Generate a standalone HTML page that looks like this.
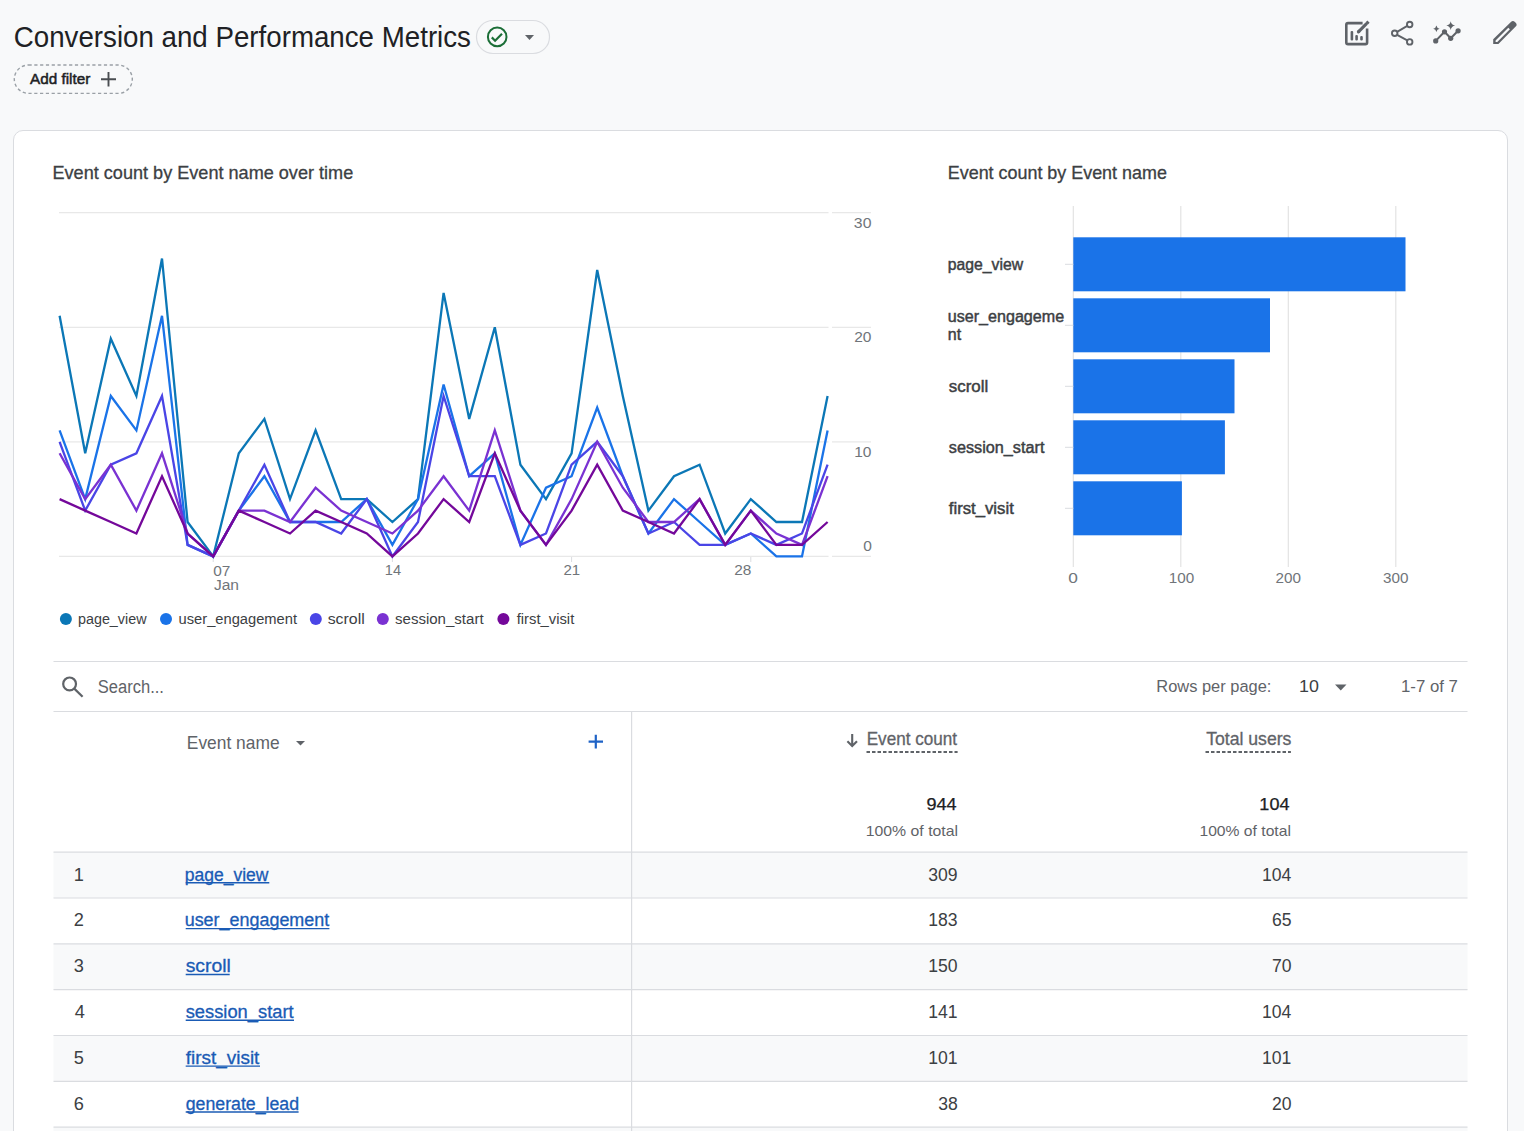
<!DOCTYPE html>
<html><head><meta charset="utf-8"><title>Conversion and Performance Metrics</title>
<style>
html,body{margin:0;padding:0;width:1524px;height:1131px;overflow:hidden;background:#f8f9fa;font-family:"Liberation Sans",sans-serif;}
.card{position:absolute;left:13.3px;top:130.2px;width:1494.6px;height:1100px;background:#fff;border:1px solid #dadce0;border-radius:10px;box-sizing:border-box;}
svg{position:absolute;left:0;top:0;}
text{font-family:"Liberation Sans",sans-serif;}
</style></head>
<body>
<div class="card"></div>
<svg width="1524" height="1131" viewBox="0 0 1524 1131">
<!-- header -->
<text x="13.75" y="46.50" style="font-size:29.3px;fill:#202124;" textLength="457.22" lengthAdjust="spacingAndGlyphs">Conversion and Performance Metrics</text>
<rect x="476.5" y="20.5" width="73" height="33" rx="16.5" fill="none" stroke="#dadce0" stroke-width="1.2"/>
<circle cx="497.2" cy="36.9" r="9.3" fill="none" stroke="#1b6e37" stroke-width="2"/>
<path d="M491.8 37.4 L495.1 40.7 L502 33.8" fill="none" stroke="#1b6e37" stroke-width="2.2"/>
<path d="M525 35 L534 35 L529.5 40 Z" fill="#5f6368"/>
<rect x="14.3" y="65" width="118" height="28.4" rx="14.2" fill="none" stroke="#9aa0a6" stroke-width="1.4" stroke-dasharray="3.2 2.6"/>
<text x="30.00" y="84.40" style="font-size:15.2px;fill:#202124;stroke:#202124;stroke-width:0.5px;" textLength="60.24" lengthAdjust="spacingAndGlyphs">Add filter</text>
<path d="M101 79.3 H116 M108.5 72 V86.6" stroke="#4a4d51" stroke-width="1.9"/>
<!-- top right icons -->
<g fill="none" stroke="#5f6368" stroke-width="2.6">
  <path d="M1362.6 23.1 H1348 Q1346.3 23.1 1346.3 24.8 V42.4 Q1346.3 44.1 1348 44.1 H1365.4 Q1367.1 44.1 1367.1 42.4 V28.6"/>
</g>
<g fill="#5f6368">
  <rect x="1350.6" y="31" width="2.6" height="9.6" rx="1.1"/>
  <rect x="1355.3" y="35" width="2.6" height="5.6" rx="1.1"/>
  <rect x="1360.2" y="36" width="2.6" height="4.6" rx="1.1"/>
</g>
<path d="M1358.4 31.8 L1366.3 23.9" stroke="#5f6368" stroke-width="3.1" stroke-linecap="round"/><path d="M1358.4 31.8 L1359.5 30.7" stroke="#5f6368" stroke-width="3.1" stroke-linecap="butt"/>
<path d="M1367.93 24.53 L1365.67 22.27 L1367.37 20.57 L1369.63 22.83 Z" fill="#5f6368"/>
<g fill="none" stroke="#5f6368" stroke-width="1.9">
  <circle cx="1409.7" cy="24.5" r="2.75"/>
  <circle cx="1394.7" cy="33.3" r="2.75"/>
  <circle cx="1409.7" cy="41.9" r="2.75"/>
  <path d="M1397.1 31.9 L1407.3 25.9 M1397.1 34.8 L1407.3 40.4"/>
</g>
<g fill="#5f6368">
  <circle cx="1435.7" cy="40.9" r="2.6"/><circle cx="1444.5" cy="31.8" r="2.6"/><circle cx="1450.7" cy="38.3" r="2.6"/><circle cx="1458.1" cy="30.8" r="2.6"/>
  <path d="M1435.7 40.9 L1444.5 31.8 L1450.7 38.3 L1458.1 30.8" fill="none" stroke="#5f6368" stroke-width="2"/>
  <path d="M1436.4 25.6 Q1436.9 28.3 1439.6 28.8 Q1436.9 29.3 1436.4 32 Q1435.9 29.3 1433.2 28.8 Q1435.9 28.3 1436.4 25.6 Z"/>
  <path d="M1450.7 21.2 Q1451.4 24.9 1455.1 25.6 Q1451.4 26.3 1450.7 30 Q1450 26.3 1446.3 25.6 Q1450 24.9 1450.7 21.2 Z"/>
</g>
<path d="M1493.2 39.2 L1510.9 21.9 Q1512.9 20 1514.9 21.9 L1515.7 22.7 Q1517.6 24.6 1515.7 26.6 L1498.4 44.1 H1493.2 Z M1495.6 40.4 V41.9 H1497.3 L1509.9 29.3 L1508.3 27.7 Z" fill="#5f6368" fill-rule="evenodd"/>
<!-- line chart -->
<text x="52.48" y="179.00" style="font-size:17.8px;fill:#3c4043;stroke:#3c4043;stroke-width:0.3px;" textLength="300.76" lengthAdjust="spacingAndGlyphs">Event count by Event name over time</text>
<line x1="59" y1="556.4" x2="828.5" y2="556.4" stroke="#e8e8e8" stroke-width="1.3"/><line x1="832" y1="556.4" x2="871" y2="556.4" stroke="#e8e8e8" stroke-width="1.3"/>
<line x1="59" y1="441.8" x2="828.5" y2="441.8" stroke="#e8e8e8" stroke-width="1.3"/><line x1="832" y1="441.8" x2="871" y2="441.8" stroke="#e8e8e8" stroke-width="1.3"/>
<line x1="59" y1="327.3" x2="828.5" y2="327.3" stroke="#e8e8e8" stroke-width="1.3"/><line x1="832" y1="327.3" x2="871" y2="327.3" stroke="#e8e8e8" stroke-width="1.3"/>
<line x1="59" y1="212.7" x2="828.5" y2="212.7" stroke="#e8e8e8" stroke-width="1.3"/><line x1="832" y1="212.7" x2="871" y2="212.7" stroke="#e8e8e8" stroke-width="1.3"/>
<line x1="213.2" y1="557" x2="213.2" y2="562" stroke="#dadce0" stroke-width="1"/>
<line x1="392.4" y1="557" x2="392.4" y2="562" stroke="#dadce0" stroke-width="1"/>
<line x1="571.6" y1="557" x2="571.6" y2="562" stroke="#dadce0" stroke-width="1"/>
<line x1="750.8" y1="557" x2="750.8" y2="562" stroke="#dadce0" stroke-width="1"/>
<text x="853.88" y="227.80" style="font-size:15.5px;fill:#70757a;" textLength="17.57" lengthAdjust="spacingAndGlyphs">30</text><text x="854.20" y="342.40" style="font-size:15.5px;fill:#70757a;">20</text><text x="854.20" y="456.90" style="font-size:15.5px;fill:#70757a;">10</text><text x="863.20" y="551.10" style="font-size:15.5px;fill:#70757a;">0</text><text x="213.21" y="575.70" style="font-size:15.5px;fill:#70757a;" textLength="17.14" lengthAdjust="spacingAndGlyphs">07</text><text x="213.90" y="589.80" style="font-size:15.5px;fill:#70757a;" textLength="25.10" lengthAdjust="spacingAndGlyphs">Jan</text><text x="384.76" y="575.40" style="font-size:15.5px;fill:#70757a;" textLength="16.28" lengthAdjust="spacingAndGlyphs">14</text><text x="563.53" y="575.40" style="font-size:15.5px;fill:#70757a;" textLength="16.71" lengthAdjust="spacingAndGlyphs">21</text><text x="734.31" y="575.40" style="font-size:15.5px;fill:#70757a;" textLength="17.14" lengthAdjust="spacingAndGlyphs">28</text>
<polyline points="59.6,315.8 85.2,453.3 110.8,338.7 136.4,396.0 162.0,258.5 187.6,522.0 213.2,556.4 238.8,453.3 264.4,418.9 290.0,499.1 315.6,430.4 341.2,499.1 366.8,499.1 392.4,522.0 418.0,499.1 443.6,292.9 469.2,418.9 494.8,327.3 520.4,464.7 546.0,499.1 571.6,453.3 597.2,270.0 622.8,396.0 648.4,510.6 674.0,476.2 699.6,464.7 725.2,533.5 750.8,499.1 776.4,522.0 802.0,522.0 827.6,396.0" fill="none" stroke="#0b77b6" stroke-width="2.3" stroke-linejoin="miter" stroke-miterlimit="4"/>
<polyline points="59.6,430.4 85.2,499.1 110.8,396.0 136.4,430.4 162.0,315.8 187.6,544.9 213.2,556.4 238.8,510.6 264.4,476.2 290.0,522.0 315.6,522.0 341.2,522.0 366.8,499.1 392.4,544.9 418.0,499.1 443.6,384.5 469.2,476.2 494.8,453.3 520.4,544.9 546.0,487.7 571.6,476.2 597.2,407.5 622.8,476.2 648.4,533.5 674.0,499.1 699.6,522.0 725.2,544.9 750.8,533.5 776.4,556.4 802.0,556.4 827.6,430.4" fill="none" stroke="#1a73e8" stroke-width="2.3" stroke-linejoin="miter" stroke-miterlimit="4"/>
<polyline points="59.6,441.8 85.2,510.6 110.8,464.7 136.4,453.3 162.0,396.0 187.6,544.9 213.2,556.4 238.8,510.6 264.4,464.7 290.0,522.0 315.6,522.0 341.2,533.5 366.8,499.1 392.4,556.4 418.0,522.0 443.6,396.0 469.2,476.2 494.8,476.2 520.4,544.9 546.0,533.5 571.6,464.7 597.2,441.8 622.8,476.2 648.4,533.5 674.0,522.0 699.6,544.9 725.2,544.9 750.8,533.5 776.4,544.9 802.0,533.5 827.6,464.7" fill="none" stroke="#4a45e6" stroke-width="2.3" stroke-linejoin="miter" stroke-miterlimit="4"/>
<polyline points="59.6,453.3 85.2,499.1 110.8,464.7 136.4,510.6 162.0,453.3 187.6,533.5 213.2,556.4 238.8,510.6 264.4,510.6 290.0,522.0 315.6,487.7 341.2,510.6 366.8,522.0 392.4,533.5 418.0,510.6 443.6,476.2 469.2,510.6 494.8,430.4 520.4,510.6 546.0,544.9 571.6,499.1 597.2,441.8 622.8,487.7 648.4,522.0 674.0,522.0 699.6,499.1 725.2,544.9 750.8,510.6 776.4,533.5 802.0,544.9 827.6,476.2" fill="none" stroke="#7a32d2" stroke-width="2.3" stroke-linejoin="miter" stroke-miterlimit="4"/>
<polyline points="59.6,499.1 85.2,510.6 110.8,522.0 136.4,533.5 162.0,476.2 187.6,533.5 213.2,556.4 238.8,510.6 264.4,522.0 290.0,533.5 315.6,510.6 341.2,522.0 366.8,533.5 392.4,556.4 418.0,533.5 443.6,499.1 469.2,522.0 494.8,453.3 520.4,510.6 546.0,544.9 571.6,510.6 597.2,464.7 622.8,510.6 648.4,522.0 674.0,533.5 699.6,499.1 725.2,544.9 750.8,510.6 776.4,544.9 802.0,544.9 827.6,522.0" fill="none" stroke="#74089a" stroke-width="2.3" stroke-linejoin="miter" stroke-miterlimit="4"/>

<circle cx="65.9" cy="619" r="6" fill="#0b77b6"/><circle cx="166" cy="619" r="6" fill="#1a73e8"/><circle cx="315.8" cy="619" r="6" fill="#4a45e6"/><circle cx="382.8" cy="619" r="6" fill="#7a32d2"/><circle cx="503.4" cy="619" r="6" fill="#74089a"/><text x="77.97" y="623.60" style="font-size:15.4px;fill:#3c4043;" textLength="68.55" lengthAdjust="spacingAndGlyphs">page_view</text><text x="178.54" y="623.60" style="font-size:15.4px;fill:#3c4043;" textLength="118.53" lengthAdjust="spacingAndGlyphs">user_engagement</text><text x="327.67" y="623.60" style="font-size:15.4px;fill:#3c4043;" textLength="37.08" lengthAdjust="spacingAndGlyphs">scroll</text><text x="395.02" y="623.60" style="font-size:15.4px;fill:#3c4043;" textLength="88.57" lengthAdjust="spacingAndGlyphs">session_start</text><text x="516.70" y="623.60" style="font-size:15.4px;fill:#3c4043;" textLength="57.56" lengthAdjust="spacingAndGlyphs">first_visit</text>
<!-- bar chart -->
<text x="947.79" y="179.20" style="font-size:17.8px;fill:#3c4043;stroke:#3c4043;stroke-width:0.3px;" textLength="219.08" lengthAdjust="spacingAndGlyphs">Event count by Event name</text>
<line x1="1073.3" y1="206" x2="1073.3" y2="567" stroke="#e3e3e3" stroke-width="1.2"/>
<line x1="1180.8" y1="206" x2="1180.8" y2="567" stroke="#e3e3e3" stroke-width="1.2"/>
<line x1="1288.3" y1="206" x2="1288.3" y2="567" stroke="#e3e3e3" stroke-width="1.2"/>
<line x1="1395.8" y1="206" x2="1395.8" y2="567" stroke="#e3e3e3" stroke-width="1.2"/>
<text x="1068.29" y="582.50" style="font-size:15.5px;fill:#70757a;" textLength="9.61" lengthAdjust="spacingAndGlyphs">0</text><text x="1168.72" y="582.50" style="font-size:15.5px;fill:#70757a;" textLength="25.44" lengthAdjust="spacingAndGlyphs">100</text><text x="1275.52" y="582.50" style="font-size:15.5px;fill:#70757a;" textLength="25.44" lengthAdjust="spacingAndGlyphs">200</text><text x="1383.02" y="582.50" style="font-size:15.5px;fill:#70757a;" textLength="25.44" lengthAdjust="spacingAndGlyphs">300</text><rect x="1073.3" y="237.3" width="332.2" height="54" fill="#1a73e8"/>
<line x1="1065" y1="264.3" x2="1073.3" y2="264.3" stroke="#dadce0" stroke-width="1"/>
<rect x="1073.3" y="298.3" width="196.7" height="54" fill="#1a73e8"/>
<line x1="1065" y1="325.3" x2="1073.3" y2="325.3" stroke="#dadce0" stroke-width="1"/>
<rect x="1073.3" y="359.3" width="161.2" height="54" fill="#1a73e8"/>
<line x1="1065" y1="386.3" x2="1073.3" y2="386.3" stroke="#dadce0" stroke-width="1"/>
<rect x="1073.3" y="420.3" width="151.6" height="54" fill="#1a73e8"/>
<line x1="1065" y1="447.3" x2="1073.3" y2="447.3" stroke="#dadce0" stroke-width="1"/>
<rect x="1073.3" y="481.3" width="108.6" height="54" fill="#1a73e8"/>
<line x1="1065" y1="508.3" x2="1073.3" y2="508.3" stroke="#dadce0" stroke-width="1"/>
<text x="947.82" y="269.80" style="font-size:16px;fill:#3c4043;stroke:#3c4043;stroke-width:0.45px;" textLength="75.29" lengthAdjust="spacingAndGlyphs">page_view</text><text x="947.79" y="322.00" style="font-size:16px;fill:#3c4043;stroke:#3c4043;stroke-width:0.45px;" textLength="116.35" lengthAdjust="spacingAndGlyphs">user_engageme</text><text x="947.80" y="339.70" style="font-size:16px;fill:#3c4043;stroke:#3c4043;stroke-width:0.45px;">nt</text><text x="948.80" y="391.80" style="font-size:16px;fill:#3c4043;stroke:#3c4043;stroke-width:0.45px;" textLength="39.46" lengthAdjust="spacingAndGlyphs">scroll</text><text x="948.80" y="452.80" style="font-size:16px;fill:#3c4043;stroke:#3c4043;stroke-width:0.45px;" textLength="95.65" lengthAdjust="spacingAndGlyphs">session_start</text><text x="948.80" y="513.80" style="font-size:16px;fill:#3c4043;stroke:#3c4043;stroke-width:0.45px;" textLength="65.00" lengthAdjust="spacingAndGlyphs">first_visit</text>
<!-- table -->
<line x1="53.5" y1="661.5" x2="1467.5" y2="661.5" stroke="#dadce0" stroke-width="1.2"/>
<line x1="53.5" y1="711.5" x2="1467.5" y2="711.5" stroke="#dadce0" stroke-width="1.2"/>
<g fill="none" stroke="#5f6368" stroke-width="2.2"><circle cx="69.6" cy="683.9" r="6.4"/><path d="M74.3 688.6 L82.6 696.7"/></g>
<text x="97.78" y="692.60" style="font-size:18px;fill:#5f6368;" textLength="66.18" lengthAdjust="spacingAndGlyphs">Search...</text><text x="1156.34" y="692.30" style="font-size:17.1px;fill:#5f6368;" textLength="115.03" lengthAdjust="spacingAndGlyphs">Rows per page:</text><text x="1298.96" y="692.30" style="font-size:17.1px;fill:#3c4043;" textLength="19.86" lengthAdjust="spacingAndGlyphs">10</text>
<path d="M1335 684.6 L1346.5 684.6 L1340.75 690.6 Z" fill="#5f6368"/>
<text x="1401.02" y="692.30" style="font-size:17.1px;fill:#5f6368;" textLength="56.93" lengthAdjust="spacingAndGlyphs">1-7 of 7</text>
<rect x="53.5" y="852.2" width="1414" height="45.8" fill="#f8f9fa"/>
<rect x="53.5" y="943.9" width="1414" height="45.8" fill="#f8f9fa"/>
<rect x="53.5" y="1035.5" width="1414" height="45.8" fill="#f8f9fa"/>
<rect x="53.5" y="1127.2" width="1414" height="45.8" fill="#f8f9fa"/>
<line x1="53.5" y1="898.0" x2="1467.5" y2="898.0" stroke="#dadce0" stroke-width="1.2"/>
<line x1="53.5" y1="943.9" x2="1467.5" y2="943.9" stroke="#dadce0" stroke-width="1.2"/>
<line x1="53.5" y1="989.7" x2="1467.5" y2="989.7" stroke="#dadce0" stroke-width="1.2"/>
<line x1="53.5" y1="1035.5" x2="1467.5" y2="1035.5" stroke="#dadce0" stroke-width="1.2"/>
<line x1="53.5" y1="1081.3" x2="1467.5" y2="1081.3" stroke="#dadce0" stroke-width="1.2"/>
<line x1="53.5" y1="1127.2" x2="1467.5" y2="1127.2" stroke="#dadce0" stroke-width="1.2"/>
<line x1="53.5" y1="1173.0" x2="1467.5" y2="1173.0" stroke="#dadce0" stroke-width="1.2"/>
<text x="73.70" y="880.60" style="font-size:18.2px;fill:#3c4043;">1</text><text x="184.70" y="880.60" style="font-size:17.6px;fill:#1a5bb5;stroke:#1a5bb5;stroke-width:0.3px;" textLength="83.72" lengthAdjust="spacingAndGlyphs">page_view</text><text x="928.20" y="880.60" style="font-size:17.6px;fill:#3c4043;">309</text><text x="1262.00" y="880.60" style="font-size:17.6px;fill:#3c4043;">104</text>
<line x1="185.7" y1="882.8" x2="269.3" y2="882.8" stroke="#1a5bb5" stroke-width="1.4"/>
<text x="73.70" y="926.43" style="font-size:18.2px;fill:#3c4043;">2</text><text x="184.68" y="926.43" style="font-size:17.6px;fill:#1a5bb5;stroke:#1a5bb5;stroke-width:0.3px;" textLength="144.56" lengthAdjust="spacingAndGlyphs">user_engagement</text><text x="928.20" y="926.43" style="font-size:17.6px;fill:#3c4043;">183</text><text x="1272.00" y="926.43" style="font-size:17.6px;fill:#3c4043;">65</text>
<line x1="185.7" y1="928.6" x2="329.4" y2="928.6" stroke="#1a5bb5" stroke-width="1.4"/>
<text x="73.70" y="972.26" style="font-size:18.2px;fill:#3c4043;">3</text><text x="185.70" y="972.26" style="font-size:17.6px;fill:#1a5bb5;stroke:#1a5bb5;stroke-width:0.3px;" textLength="45.17" lengthAdjust="spacingAndGlyphs">scroll</text><text x="928.20" y="972.26" style="font-size:17.6px;fill:#3c4043;">150</text><text x="1272.00" y="972.26" style="font-size:17.6px;fill:#3c4043;">70</text>
<line x1="185.7" y1="974.5" x2="229.7" y2="974.5" stroke="#1a5bb5" stroke-width="1.4"/>
<text x="74.70" y="1018.09" style="font-size:18.2px;fill:#3c4043;">4</text><text x="185.70" y="1018.09" style="font-size:17.6px;fill:#1a5bb5;stroke:#1a5bb5;stroke-width:0.3px;" textLength="107.94" lengthAdjust="spacingAndGlyphs">session_start</text><text x="928.20" y="1018.09" style="font-size:17.6px;fill:#3c4043;">141</text><text x="1262.00" y="1018.09" style="font-size:17.6px;fill:#3c4043;">104</text>
<line x1="185.7" y1="1020.3" x2="294.0" y2="1020.3" stroke="#1a5bb5" stroke-width="1.4"/>
<text x="73.70" y="1063.92" style="font-size:18.2px;fill:#3c4043;">5</text><text x="185.70" y="1063.92" style="font-size:17.6px;fill:#1a5bb5;stroke:#1a5bb5;stroke-width:0.3px;" textLength="73.69" lengthAdjust="spacingAndGlyphs">first_visit</text><text x="928.20" y="1063.92" style="font-size:17.6px;fill:#3c4043;">101</text><text x="1262.00" y="1063.92" style="font-size:17.6px;fill:#3c4043;">101</text>
<line x1="185.7" y1="1066.1" x2="260.0" y2="1066.1" stroke="#1a5bb5" stroke-width="1.4"/>
<text x="73.70" y="1109.75" style="font-size:18.2px;fill:#3c4043;">6</text><text x="185.70" y="1109.75" style="font-size:17.6px;fill:#1a5bb5;stroke:#1a5bb5;stroke-width:0.3px;" textLength="113.42" lengthAdjust="spacingAndGlyphs">generate_lead</text><text x="938.20" y="1109.75" style="font-size:17.6px;fill:#3c4043;">38</text><text x="1272.00" y="1109.75" style="font-size:17.6px;fill:#3c4043;">20</text>
<line x1="185.7" y1="1112.0" x2="298.6" y2="1112.0" stroke="#1a5bb5" stroke-width="1.4"/>

<line x1="53.5" y1="852.2" x2="1467.5" y2="852.2" stroke="#dadce0" stroke-width="1.2"/>
<line x1="631.6" y1="711.5" x2="631.6" y2="1131" stroke="#dadce0" stroke-width="1.2"/>
<text x="186.82" y="748.60" style="font-size:17.8px;fill:#5f6368;" textLength="92.75" lengthAdjust="spacingAndGlyphs">Event name</text>
<path d="M296 741 L305 741 L300.5 745.5 Z" fill="#5f6368"/>
<path d="M588.6 741.6 H603 M595.8 734.7 V748.5" stroke="#1f63c6" stroke-width="2.2"/>
<path d="M852.2 734 V745.5 M847.4 741.2 L852.2 746 L857 741.2" fill="none" stroke="#5f6368" stroke-width="2.1"/>
<text x="866.73" y="744.90" style="font-size:17.7px;fill:#5f6368;stroke:#5f6368;stroke-width:0.3px;" textLength="90.31" lengthAdjust="spacingAndGlyphs">Event count</text>
<line x1="866.5" y1="752" x2="957.6" y2="752" stroke="#5f6368" stroke-width="1.8" stroke-dasharray="3.5 2"/>
<text x="1206.20" y="744.90" style="font-size:17.7px;fill:#5f6368;stroke:#5f6368;stroke-width:0.3px;" textLength="85.23" lengthAdjust="spacingAndGlyphs">Total users</text>
<line x1="1205.5" y1="752" x2="1290.9" y2="752" stroke="#5f6368" stroke-width="1.8" stroke-dasharray="3.5 2"/>
<text x="926.57" y="809.70" style="font-size:16px;fill:#202124;stroke:#202124;stroke-width:0.25px;" textLength="30.09" lengthAdjust="spacingAndGlyphs">944</text><text x="865.75" y="836.00" style="font-size:15px;fill:#5f6368;" textLength="92.25" lengthAdjust="spacingAndGlyphs">100% of total</text><text x="1259.37" y="809.70" style="font-size:16px;fill:#202124;stroke:#202124;stroke-width:0.25px;" textLength="30.09" lengthAdjust="spacingAndGlyphs">104</text><text x="1199.46" y="836.00" style="font-size:15px;fill:#5f6368;" textLength="91.43" lengthAdjust="spacingAndGlyphs">100% of total</text>
</svg>
</body></html>
